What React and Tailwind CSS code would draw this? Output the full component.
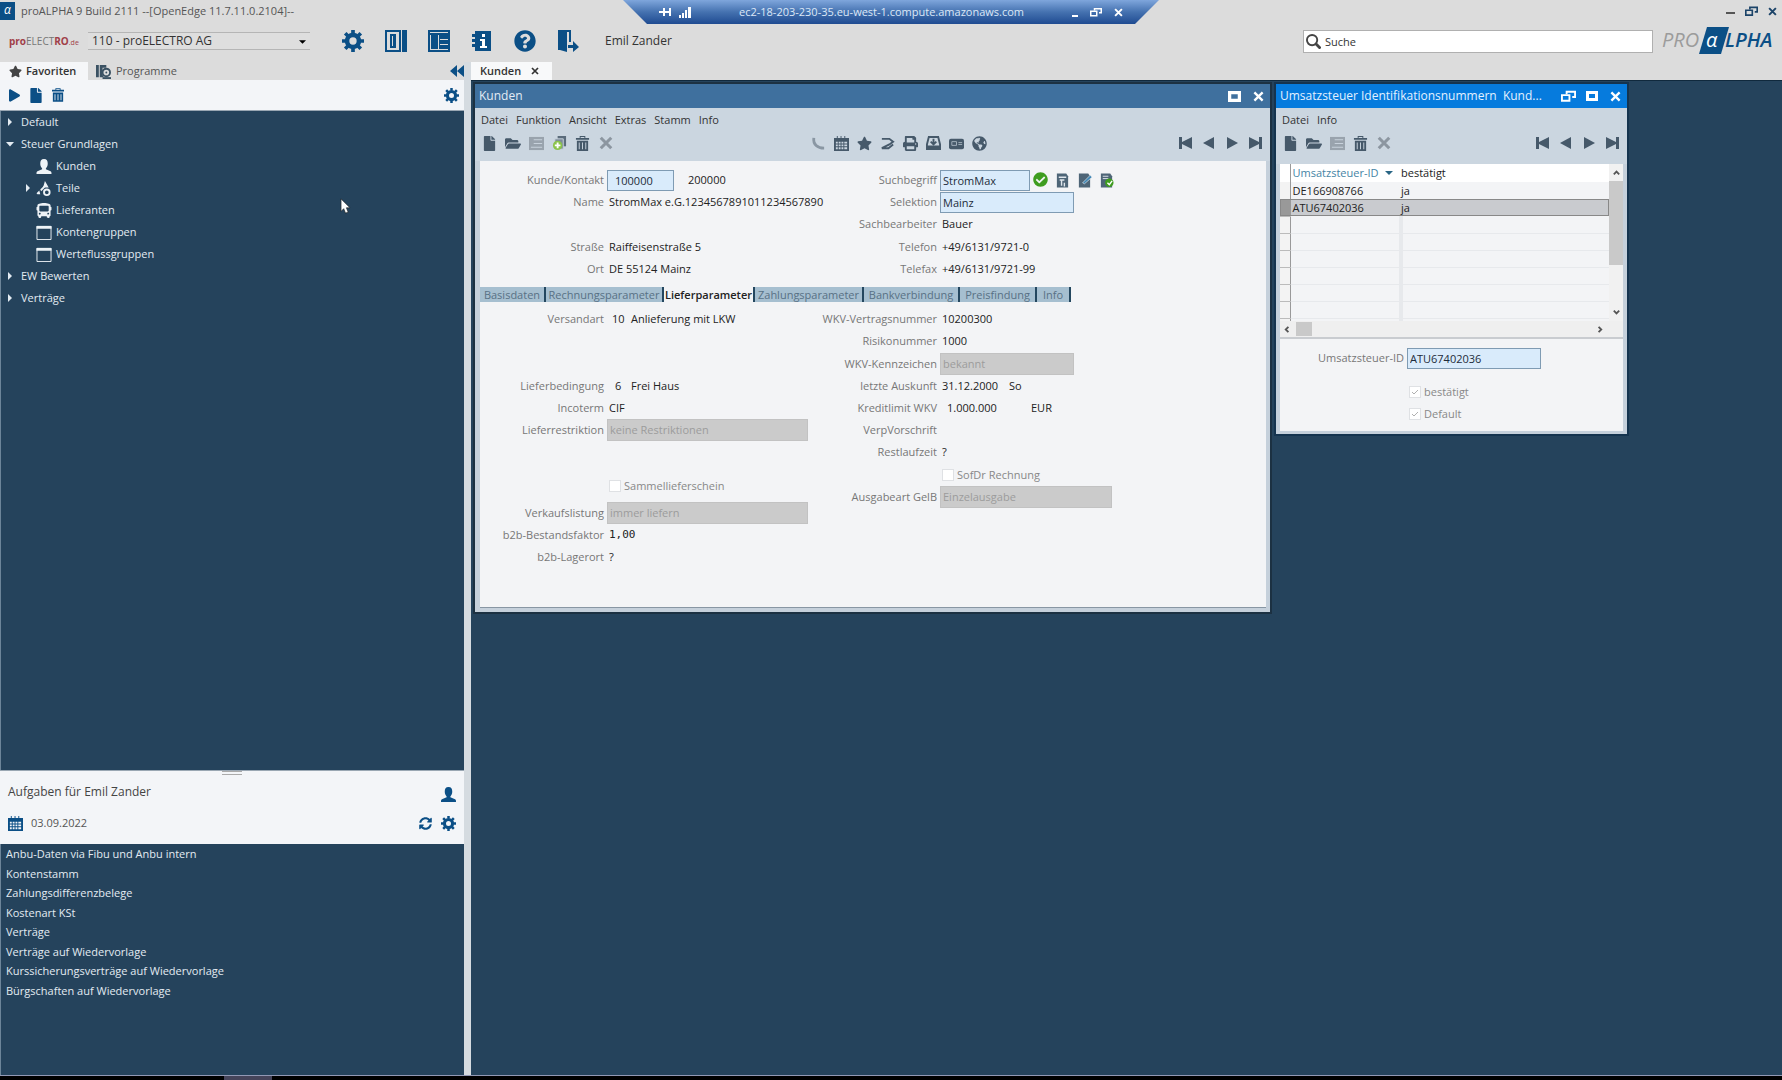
import {
  FaStar,
  FaPlay,
  FaFile,
  FaFolderOpen,
  FaPrint,
  FaBus,
  FaQuestionCircle,
  FaCheckCircle,
  FaSyncAlt,
  FaGlobeAmericas,
} from "react-icons/fa";

const GearIcon = ({ className }) => (
  <svg viewBox="-12 -12 24 24" className={className} stroke="currentColor" fill="none">
    <circle r="6.5" strokeWidth="5" />
    <path d="M0-12v4M0 12V8M-12 0h4M12 0H8M-8.500-8.500l3 3M8.500-8.500l-3 3M-8.500 8.500l3-3M8.500 8.500l-3-3" strokeWidth="4" />
  </svg>
);

const PersonIcon = ({ className }) => (
  <svg viewBox="0 0 16 16" className={className} fill="currentColor">
    <path d="M8 0c3 0 4 2 4 5 0 2-1 4-2 5v1l5 2c1 1 1 1 1 3H0c0-2 0-2 1-3l5-2v-1C5 9 4 7 4 5c0-3 1-5 4-5z" />
  </svg>
);

const TrashIcon = ({ className }) => (
  <svg viewBox="0 0 14 16" className={className} fill="currentColor">
    <path fillRule="evenodd" d="M4 0h6v2h4v2H0V2h4zM5 1v1h4V1zM1 5h12v11H1zM3 7v7h1V7zM6.500 7v7h1V7zM10 7v7h1V7z" />
  </svg>
);

const SpreadIcon = ({ className }) => (
  <svg viewBox="0 0 16 16" className={className} fill="currentColor">
    <path d="M3 0h1v2h3V0h1v2h3V0h1v2h4v14H0V2h3zM2 6v2h2V6zm3 0v2h2V6zm3 0v2h2V6zm3 0v2h3V6zM2 9v2h2V9zm3 0v2h2V9zm3 0v2h2V9zm3 0v2h3V9zM2 12v2h2v-2zm3 0v2h2v-2zm3 0v2h2v-2zm3 0v2h3v-2z" fillRule="evenodd" />
  </svg>
);

const CrossIcon = ({ className }) => (
  <svg viewBox="0 0 12 12" className={className} stroke="currentColor" strokeWidth="2.6" fill="none">
    <path d="M1.5 1.5l9 9M10.5 1.5l-9 9" />
  </svg>
);

const RestoreIcon = ({ className }) => (
  <svg viewBox="0 0 16 12" className={className} stroke="currentColor" strokeWidth="2" fill="none">
    <path d="M6 4V1.5h9V7h-3" />
    <path d="M1 5h8v6H1z" />
  </svg>
);

const MaxIcon = ({ className }) => (
  <svg viewBox="0 0 12 12" className={className} stroke="currentColor" strokeWidth="3" fill="none">
    <path d="M1.5 2.5h9v7h-9z" />
  </svg>
);

const SaveIcon = ({ className }) => (
  <svg viewBox="0 0 16 16" className={className} fill="currentColor">
    <path d="M0 1h16v14H0z" />
    <path d="M5 4h9M5 8h9M2 12h12" stroke="#cbd5df" strokeWidth="1" />
  </svg>
);

const CopyIcon = ({ className }) => (
  <svg viewBox="0 0 16 16" className={className}>
    <path d="M6 0h9v11H6z" fill="#5b6c7b" />
    <path d="M3 3h9v11H3z" fill="#7d8c99" stroke="#cbd5df" />
    <circle cx="6" cy="10" r="5" fill="#8bc34a" />
    <path d="M6 7v6M3 10h6" stroke="#fff" strokeWidth="2" />
  </svg>
);

const PhoneIcon = ({ className }) => (
  <svg viewBox="0 0 16 16" className={className} fill="none" stroke="currentColor" strokeWidth="3">
    <path d="M3 2c-1 7 4 11 11 11" />
  </svg>
);

const LinkIcon = ({ className }) => (
  <svg viewBox="0 0 16 16" className={className} fill="none" stroke="currentColor" strokeWidth="2">
    <path d="M2 3h8l4 3-4 3-8 4h7l5-4" />
  </svg>
);

const InboxIcon = ({ className }) => (
  <svg viewBox="0 0 16 16" className={className} fill="none" stroke="currentColor" strokeWidth="2">
    <path d="M3 1h10l2 8v5H1V9z" />
    <path d="M1 11h14v3H1z" fill="currentColor" />
    <path d="M8 3v6M5 6l3 3 3-3" />
  </svg>
);

const CardIcon = ({ className }) => (
  <svg viewBox="0 0 16 16" className={className}>
    <rect y="3" width="16" height="11" rx="2" fill="currentColor" />
    <path d="M3 6h5v4H3zM10 7h4M10 9h4" stroke="#a5b2be" fill="none" />
  </svg>
);

const PartsIcon = ({ className }) => (
  <svg viewBox="0 0 16 16" className={className} fill="currentColor">
    <path d="M9 0l4 7H7zM0 13l3-3 1 4H1z" />
    <path d="M4 9l4-4 1 2-4 4z" />
    <circle cx="11" cy="12" r="3" fill="none" stroke="currentColor" strokeWidth="2" />
  </svg>
);

const WindowIcon = ({ className }) => (
  <svg viewBox="0 0 16 16" className={className} fill="none" stroke="currentColor">
    <path d="M.5 1.5h15v14H.5z" />
    <path d="M0 2.5h16" strokeWidth="3" />
  </svg>
);

const ProgramsIcon = ({ className }) => (
  <svg viewBox="0 0 16 16" className={className} fill="currentColor">
    <path d="M0 1h3v13H0zM4 1h7v3H7v8h1v2H4z" />
    <circle cx="11" cy="9" r="4" fill="none" stroke="currentColor" strokeWidth="2" />
    <circle cx="11" cy="9" r="1" />
    <path d="M7 14h9v2H7z" />
  </svg>
);

const SearchIcon = ({ className }) => (
  <svg viewBox="0 0 16 16" className={className} fill="none" stroke="currentColor" strokeWidth="2">
    <circle cx="6.5" cy="6.5" r="5.5" />
    <path d="M10.5 10.5l5 5" strokeWidth="3" />
  </svg>
);

const SideIcon = ({ className }) => (
  <svg viewBox="0 0 22 22" className={className} fill="currentColor">
    <path fillRule="evenodd" d="M0 0h16v22H0zM2 2v18h12V2z" />
    <path d="M17 0h5v22h-5z" />
    <path fillRule="evenodd" d="M5 4h6v14H5zM7 6v10h1V6z" />
  </svg>
);

const GridIcon = ({ className }) => (
  <svg viewBox="0 0 22 22" className={className} fill="currentColor">
    <path fillRule="evenodd" d="M0 0h22v22H0zM2 2v1h18V2zM2 5v14h1V5zM10 5v14h1V5zM12 9v1h8V9zM12 14v1h8v-1zM2 20h18v-1H2z" />
  </svg>
);

const InfoIcon = ({ className }) => (
  <svg viewBox="0 0 22 22" className={className} fill="currentColor">
    <path d="M4 1h16v20H4z" />
    <path d="M1 4h4v3H1zM1 9h4v3H1zM1 14h4v3H1z" />
    <path d="M11 4h3v3h-3zM9 9h5v7h2v2H9v-2h2v-5H9z" fill="#fff" />
  </svg>
);

const ExitIcon = ({ className }) => (
  <svg viewBox="0 0 22 22" className={className} fill="currentColor">
    <path d="M1 0h13v12h-2V2h-2v20l-7-2H1z" />
    <path d="M11 15h5v-4l6 6-6 5v-4h-5z" />
  </svg>
);

const DocIcon = ({ className, badge }) => (
  <svg viewBox="0 0 16 16" className={className}>
    <path d="M2 1h10l2 3v12H2z" fill="#4e6577" />
    {badge === "text" && <path d="M4 5h8M7 8v6M5 8h5M10 11v4" stroke="#dfe6ec" strokeWidth="1.5" />}
    {badge === "edit" && <path d="M6 11l8-8 2 2-8 7z" fill="#3f86b5" stroke="#e3e9ee" strokeWidth=".7" />}
    {badge === "ok" && <path d="M4 4h6M4 6.500h6" stroke="#dfe6ec" />}
    {badge === "ok" && <circle cx="11" cy="11" r="4.500" fill="#3f9d1f" />}
    {badge === "ok" && <path d="M9 11l2 2 3-4" fill="none" stroke="#fff" strokeWidth="1.500" />}
  </svg>
);

const tree = [
  { label: "Default", arrow: "right" },
  { label: "Steuer Grundlagen", arrow: "down" },
  { label: "Kunden", icon: PersonIcon },
  { label: "Teile", icon: PartsIcon, arrow: "right" },
  { label: "Lieferanten", icon: FaBus },
  { label: "Kontengruppen", icon: WindowIcon },
  { label: "Werteflussgruppen", icon: WindowIcon },
  { label: "EW Bewerten", arrow: "right" },
  { label: "Verträge", arrow: "right" },
];

const tasks = [
  "Anbu-Daten via Fibu und Anbu intern",
  "Kontenstamm",
  "Zahlungsdifferenzbelege",
  "Kostenart KSt",
  "Verträge",
  "Verträge auf Wiedervorlage",
  "Kurssicherungsverträge auf Wiedervorlage",
  "Bürgschaften auf Wiedervorlage",
];

const tabs = [
  { label: "Basisdaten", width: "w-[66px]" },
  { label: "Rechnungsparameter", width: "w-[118px]" },
  { label: "Lieferparameter", width: "w-[91px]", active: true },
  { label: "Zahlungsparameter", width: "w-[109px]" },
  { label: "Bankverbindung", width: "w-[96px]" },
  { label: "Preisfindung", width: "w-[77px]" },
  { label: "Info", width: "w-[34px]" },
];

function IconButton({ label, children, className = "" }) {
  return (
    <button type="button" aria-label={label} className={`flex items-center justify-center ${className}`}>
      {children}
    </button>
  );
}

function Arrow({ dir }) {
  return (
    <svg viewBox="0 0 8 8" className="w-2 h-2 shrink-0" fill="currentColor">
      {dir === "down" ? <path d="M0 2h8L4 6.500z" /> : <path d="M2 0v8l4-4z" />}
    </svg>
  );
}

function RemoteBar() {
  return (
    <div className="absolute top-0 left-1/2 -translate-x-1/2 w-[536px] h-6 flex items-center pl-9 pr-9 text-white text-[11px] bg-linear-to-b from-[#7fa6dc] via-[#4572b0] to-[#1f4b91] [clip-path:polygon(0_0,100%_0,calc(100%-24px)_100%,24px_100%)]">
      <svg viewBox="0 0 12 10" className="w-3 h-[10px]" fill="none" stroke="currentColor" strokeWidth="2">
        <path d="M0 5h5M5 1v8M5 5h6M11 1v8" />
      </svg>
      <svg viewBox="0 0 12 12" className="w-3 h-3 ml-2" fill="currentColor">
        <path d="M0 9h2v3H0zM3 7h2v5H3zM6 4h2v8H6zM9 1h3v11H9z" />
      </svg>
      <span className="flex-1 text-center text-[#dce8f7]">ec2-18-203-230-35.eu-west-1.compute.amazonaws.com</span>
      <div className="flex items-center gap-3">
        <IconButton label="Minimieren"><span className="w-[6px] h-[2px] bg-white mt-2" /></IconButton>
        <IconButton label="Verkleinern"><RestoreIcon className="w-3 h-[10px]" /></IconButton>
        <IconButton label="Schließen"><CrossIcon className="w-[9px] h-[9px]" /></IconButton>
      </div>
    </div>
  );
}

function Logo() {
  return (
    <svg viewBox="0 0 120 28" className="w-[120px] h-7 shrink-0" role="img" aria-label="proALPHA">
      <path d="M45 0h22l-8 27H37z" fill="#0b4f86" />
      <g fontFamily="Open Sans, sans-serif" fontStyle="italic" fontSize="20">
        <text x="0" y="20" fill="#9b9b9b">PRO</text>
        <text x="44" y="20" fill="#fff">α</text>
        <text x="63" y="20" fill="#0b4f86" fontWeight="600">LPHA</text>
      </g>
    </svg>
  );
}

function Header() {
  return (
    <header className="relative bg-[#dcdcdc] text-[#333]">
      <div className="flex items-center h-[22px] text-[11px]">
        <div className="w-[15px] h-[18px] bg-[#0b4f86] text-white text-xs leading-4 text-center italic">α</div>
        <span className="ml-[6px] flex-1 text-[#555]">proALPHA 9 Build 2111 --[OpenEdge 11.7.11.0.2104]--</span>
        <div className="flex items-center gap-[10px] pr-[5px] text-[#1b4368]">
          <IconButton label="Fenster minimieren"><span className="w-[9px] h-[2px] bg-[#555] mt-1" /></IconButton>
          <IconButton label="Fenster verkleinern"><RestoreIcon className="w-[13px] h-[10px]" /></IconButton>
          <IconButton label="Fenster schließen"><CrossIcon className="w-[9px] h-[9px]" /></IconButton>
        </div>
      </div>
      <RemoteBar />
      <div className="flex items-center h-10 pb-[2px]">
        <div className="w-[88px] pl-[9px] text-[10px]">
          <b className="text-[#a04048]">pro</b><span className="text-[#777]">ELECT</span><b className="text-[#a04048]">RO</b><span className="text-[7px] text-[#a04048]">.de</span>
        </div>
        <div className="relative w-[222px]">
          <select aria-label="Firma" className="block w-full h-[18px] pl-1 appearance-none text-xs leading-4 border-y border-[#b5b5b5] bg-[#dedede]">
            <option>110 - proELECTRO AG</option>
          </select>
          <svg viewBox="0 0 8 4" className="absolute right-1 top-2 w-[7px] h-1 pointer-events-none"><path d="M0 0h8L4 4z" /></svg>
        </div>
        <div className="flex items-center gap-[21px] ml-8 text-[#0b4f86]">
          <IconButton label="Einstellungen"><GearIcon className="w-[22px] h-[22px]" /></IconButton>
          <IconButton label="Seitenleiste"><SideIcon className="w-[22px] h-[22px]" /></IconButton>
          <IconButton label="Layout"><GridIcon className="w-[22px] h-[22px]" /></IconButton>
          <IconButton label="Information"><InfoIcon className="w-[22px] h-[22px]" /></IconButton>
          <IconButton label="Hilfe"><FaQuestionCircle className="w-[22px] h-[22px]" /></IconButton>
          <IconButton label="Abmelden"><ExitIcon className="w-[22px] h-[22px]" /></IconButton>
        </div>
        <span className="ml-[26px] flex-1 text-xs">Emil Zander</span>
        <label className="flex items-center w-[350px] h-[23px] mr-[9px] px-[2px] bg-white border border-[#b0b0b0]">
          <SearchIcon className="w-[15px] h-[15px] text-[#444]" />
          <input aria-label="Suche" defaultValue="Suche" className="flex-1 h-full px-1 text-[11px] outline-none" />
        </label>
        <Logo />
      </div>
    </header>
  );
}

function Sidebar() {
  return (
    <aside className="flex flex-col w-[464px] shrink-0 bg-[#25435c]">
      <div className="flex h-[18px] bg-[#dcdcdc] text-[11px] text-[#444]">
        <button type="button" className="flex items-center w-[88px] pl-[9px] gap-1 bg-[#f5f6f8] font-semibold text-[#333]">
          <FaStar className="w-[13px] h-[13px] text-[#444]" />Favoriten
        </button>
        <button type="button" className="flex items-center pl-2 gap-[5px] text-[#555]">
          <ProgramsIcon className="w-[15px] h-[15px] text-[#3b5263]" />Programme
        </button>
        <IconButton label="Leiste einklappen" className="ml-auto text-[#0b4f86]">
          <svg viewBox="0 0 14 12" className="w-[14px] h-3" fill="currentColor"><path d="M7 0v12L0 6zM14 0v12L7 6z" /></svg>
        </IconButton>
      </div>
      <div className="flex items-center h-[31px] pl-[9px] pr-[5px] gap-[10px] bg-[#f3f5f8] border-b border-[#9aa7b3] text-[#0b4f86]">
        <IconButton label="Starten"><FaPlay className="w-[11px] h-[13px]" /></IconButton>
        <IconButton label="Neu"><FaFile className="w-3 h-[15px]" /></IconButton>
        <IconButton label="Löschen"><TrashIcon className="w-3 h-[14px]" /></IconButton>
        <IconButton label="Favoriten einstellen" className="ml-auto"><GearIcon className="w-[15px] h-[15px]" /></IconButton>
      </div>
      <ul className="flex-1 border-l border-[#6d8599] text-[11px] text-[#e3ebf2]">
        {tree.map(({ label, arrow, icon: Icon }) => (
          <li key={label} className={`flex items-center h-[22px] ${Icon ? "pl-[23px]" : "pl-[5px]"}`}>
            <span className={Icon ? "w-3" : "w-[15px]"}>{arrow && <Arrow dir={arrow} />}</span>
            {Icon && <Icon className="w-4 h-[15px] mr-1 text-[#eef3f7]" />}
            {label}
          </li>
        ))}
      </ul>
      <section className="h-[74px] px-[8px] bg-[#f3f5f8] border-t border-[#9aa7b3] text-[#444]">
        <div className="w-5 h-1 mx-auto border-y border-[#aaa]" />
        <div className="flex items-center justify-between h-[34px]">
          <h2 className="text-xs">Aufgaben für Emil Zander</h2>
          <PersonIcon className="w-[15px] h-[15px] mt-1 text-[#0b4f86]" />
        </div>
        <div className="flex items-center h-7 text-[11px] text-[#555]">
          <SpreadIcon className="w-[15px] h-[15px] text-[#0b4f86]" />
          <span className="ml-2">03.09.2022</span>
          <div className="flex gap-2 ml-auto text-[#0b4f86]">
            <IconButton label="Aktualisieren"><FaSyncAlt className="w-[15px] h-[13px]" /></IconButton>
            <IconButton label="Aufgaben einstellen"><GearIcon className="w-[15px] h-[15px]" /></IconButton>
          </div>
        </div>
      </section>
      <div className="h-[231px] pl-[5px] border-l border-[#6d8599]">
        <ul className="flex flex-col justify-between h-[156px] text-[11px] leading-[19px] text-[#e3ebf2]">
          {tasks.map((task) => <li key={task}>{task}</li>)}
        </ul>
      </div>
    </aside>
  );
}

const TriangleIcon = ({ d }) => (
  <svg viewBox="0 0 14 14" className="w-[14px] h-[14px]" fill="currentColor"><path d={d} /></svg>
);

function Navigation() {
  return (
    <div className="flex gap-[9px] text-[#46596a]">
      <IconButton label="Erster Satz"><TriangleIcon d="M0 1h3v5l10-5v12L3 8v5H0z" /></IconButton>
      <IconButton label="Voriger Satz"><TriangleIcon d="M12 1v12L1 7z" /></IconButton>
      <IconButton label="Nächster Satz"><TriangleIcon d="M2 1v12l11-6z" /></IconButton>
      <IconButton label="Letzter Satz"><TriangleIcon d="M14 1h-3v5L1 1v12l10-5v5h3z" /></IconButton>
    </div>
  );
}

function Menu({ items }) {
  return (
    <nav className="flex items-center gap-2 h-6 px-[6px] text-[11px] text-[#333]">
      {items.map((item) => <button key={item} type="button">{item}</button>)}
    </nav>
  );
}

function EditIcons({ copy }) {
  return (
    <div className="flex gap-2 text-[#46596a]">
      <IconButton label="Neu"><FaFile className="w-[15px] h-[15px]" /></IconButton>
      <IconButton label="Öffnen"><FaFolderOpen className="w-4 h-[15px]" /></IconButton>
      <IconButton label="Speichern"><SaveIcon className="w-[15px] h-[15px] text-[#99a3ad]" /></IconButton>
      {copy && <IconButton label="Kopieren"><CopyIcon className="w-[15px] h-[15px]" /></IconButton>}
      <IconButton label="Löschen"><TrashIcon className="w-[15px] h-[15px]" /></IconButton>
      <IconButton label="Abbrechen"><CrossIcon className="w-4 h-[14px] text-[#8c96a0]" /></IconButton>
    </div>
  );
}

function Row({ label, id, children, className = "" }) {
  return (
    <div className={`flex items-center h-[22px] whitespace-nowrap ${className}`}>
      <label htmlFor={id} className="w-[124px] mr-[5px] text-right text-[#777] shrink-0">{label}</label>
      {children}
    </div>
  );
}

function Field({ id, value, className }) {
  return <input id={id} defaultValue={value} className={`h-[21px] -ml-[2px] px-[2px] bg-[#d9ebfb] border border-[#7f9bb3] text-[#1d2c3a] ${className}`} />;
}

function Disabled({ id, value, className }) {
  return (
    <select id={id} disabled className={`h-[22px] -ml-[2px] px-[2px] appearance-none bg-[#cbcbcb] border border-[#c2c2c2] text-[#9c9c9c] opacity-100 ${className}`}>
      <option>{value}</option>
    </select>
  );
}

function Check({ label, checked }) {
  return (
    <label className="flex items-center gap-[3px] text-[#888]">
      <span className="relative flex">
        <input type="checkbox" disabled defaultChecked={checked} className="w-3 h-3 appearance-none bg-white border border-[#dfe1e4]" />
        {checked && <svg viewBox="0 0 12 12" className="absolute inset-0 w-3 h-3" fill="none" stroke="#b0b0b0"><path d="M3 6l2 2 4-4" /></svg>}
      </span>
      {label}
    </label>
  );
}

function CustomerWindow() {
  return (
    <section className="absolute left-[2px] top-[1px] w-[799px] h-[532px] flex flex-col bg-[#c5d0db] border-2 border-[#1c3142] text-[11px]">
      <div className="flex items-center h-[24px] pl-1 pr-[6px] bg-[#3f709e] text-white">
        <h2 className="flex-1 text-xs text-[#e3ecf5]">Kunden</h2>
        <IconButton label="Maximieren" className="mr-3"><MaxIcon className="w-[13px] h-[13px]" /></IconButton>
        <IconButton label="Schließen"><CrossIcon className="w-[11px] h-[11px]" /></IconButton>
      </div>
      <div className="h-[53px] bg-[#cbd6e0]">
        <Menu items={["Datei", "Funktion", "Ansicht", "Extras", "Stamm", "Info"]} />
        <div className="flex items-center justify-between pl-[7px] pr-2 h-[22px]">
          <EditIcons copy />
          <div className="flex gap-2 ml-1 text-[#46596a]">
            <IconButton label="Telefon"><PhoneIcon className="w-[15px] h-[15px] text-[#8a97a3]" /></IconButton>
            <IconButton label="Kalender"><SpreadIcon className="w-[15px] h-[15px]" /></IconButton>
            <IconButton label="Favorit"><FaStar className="w-[15px] h-[15px]" /></IconButton>
            <IconButton label="Verknüpfung"><LinkIcon className="w-[15px] h-[15px]" /></IconButton>
            <IconButton label="Drucken"><FaPrint className="w-[15px] h-[15px]" /></IconButton>
            <IconButton label="Ablage"><InboxIcon className="w-[15px] h-[15px]" /></IconButton>
            <IconButton label="Karte"><CardIcon className="w-[15px] h-[15px]" /></IconButton>
            <IconButton label="Web"><FaGlobeAmericas className="w-[15px] h-[15px]" /></IconButton>
          </div>
          <Navigation />
        </div>
      </div>
      <div className="flex-1 ml-[5px] mr-1 mb-1 pt-[8px] bg-[#f3f4f6] border-b border-[#8896a3] text-[#222]">
        <div className="grid grid-cols-[333px_1fr]">
          <div>
            <Row label="Kunde/Kontakt" id="kunde">
              <Field id="kunde" value="100000" className="w-[67px] pl-[7px]" />
              <span className="ml-[14px]">200000</span>
            </Row>
            <Row label="Name">StromMax e.G.1234567891011234567890</Row>
            <Row />
            <Row label="Straße" className="mt-px">Raiffeisenstraße 5</Row>
            <Row label="Ort">DE 55124 Mainz</Row>
          </div>
          <div>
            <Row label="Suchbegriff" id="such">
              <Field id="such" value="StromMax" className="w-[90px]" />
              <div className="flex gap-[7px] ml-[3px]">
                <FaCheckCircle className="w-[15px] h-[15px] text-[#3f9d1f]" />
                <DocIcon badge="text" className="w-[15px] h-4" />
                <DocIcon badge="edit" className="w-[15px] h-4" />
                <DocIcon badge="ok" className="w-[15px] h-4" />
              </div>
            </Row>
            <Row label="Selektion" id="selektion"><Field id="selektion" value="Mainz" className="w-[134px]" /></Row>
            <Row label="Sachbearbeiter">Bauer</Row>
            <Row label="Telefon" className="mt-px">+49/6131/9721-0</Row>
            <Row label="Telefax">+49/6131/9721-99</Row>
          </div>
        </div>
        <div role="tablist" className="flex h-[15px] mt-[7px] leading-[14px]">
          {tabs.map(({ label, width, active }) => (
            <button
              key={label}
              role="tab"
              type="button"
              aria-selected={Boolean(active)}
              className={`${width} text-center whitespace-nowrap border-r-2 border-[#24475f] ${active ? "font-semibold text-[#222]" : "bg-[#a6bfd0] text-[#587185]"}`}
            >
              {label}
            </button>
          ))}
        </div>
        <div className="grid grid-cols-[333px_1fr] pt-[6px]">
          <div>
            <Row label="Versandart"><span className="w-[22px] pl-[3px]">10</span>Anlieferung mit LKW</Row>
            <Row />
            <Row />
            <Row label="Lieferbedingung" className="mt-px"><span className="w-[22px] pl-[6px]">6</span>Frei Haus</Row>
            <Row label="Incoterm">CIF</Row>
            <Row label="Lieferrestriktion" id="restriktion"><Disabled id="restriktion" value="keine Restriktionen" className="w-[201px]" /></Row>
            <Row className="mt-[34px]"><Check label="Sammellieferschein" /></Row>
            <Row label="Verkaufslistung" id="listung" className="mt-[5px]"><Disabled id="listung" value="immer liefern" className="w-[201px]" /></Row>
            <Row label="b2b-Bestandsfaktor"><span className="font-['DejaVu_Sans_Mono',monospace]">1,00</span></Row>
            <Row label="b2b-Lagerort">?</Row>
          </div>
          <div>
            <Row label="WKV-Vertragsnummer">10200300</Row>
            <Row label="Risikonummer">1000</Row>
            <Row label="WKV-Kennzeichen" id="wkv" className="mt-px"><Disabled id="wkv" value="bekannt" className="w-[134px]" /></Row>
            <Row label="letzte Auskunft"><span className="w-[67px]">31.12.2000</span>So</Row>
            <Row label="Kreditlimit WKV"><span className="w-[89px] pl-[5px]">1.000.000</span>EUR</Row>
            <Row label="VerpVorschrift" />
            <Row label="Restlaufzeit">?</Row>
            <Row className="mt-px"><Check label="SofDr Rechnung" /></Row>
            <Row label="Ausgabeart GelB" id="ausgabe"><Disabled id="ausgabe" value="Einzelausgabe" className="w-[172px]" /></Row>
          </div>
        </div>
      </div>
    </section>
  );
}

const Chevron = ({ d, className = "" }) => (
  <svg viewBox="0 0 10 10" className={`w-[9px] h-[9px] ${className}`} fill="none" stroke="#555" strokeWidth="2"><path d={d} /></svg>
);

function VatWindow() {
  const rows = [["DE166908766", "ja"], ["ATU67402036", "ja"], [], [], [], [], [], [], []];

  return (
    <section className="absolute left-[803px] top-[1px] w-[355px] h-[354px] flex flex-col bg-[#c5d0db] border-2 border-[#15344f] text-[11px]">
      <div className="flex items-center h-[24px] pl-1 pr-[6px] bg-[#067bdd] text-white">
        <h2 className="flex-1 text-xs whitespace-nowrap text-[#e3f1ff]">Umsatzsteuer Identifikationsnummern&nbsp; Kund...</h2>
        <IconButton label="Verkleinern" className="mr-[10px]"><RestoreIcon className="w-[15px] h-3" /></IconButton>
        <IconButton label="Maximieren" className="mr-3"><MaxIcon className="w-[12px] h-[12px]" /></IconButton>
        <IconButton label="Schließen"><CrossIcon className="w-[11px] h-[11px]" /></IconButton>
      </div>
      <div className="h-[56px] bg-[#cbd6e0]">
        <Menu items={["Datei", "Info"]} />
        <div className="flex items-center justify-between pl-[7px] pr-[8px] h-[22px]">
          <EditIcons />
          <Navigation />
        </div>
      </div>
      <div className="flex-1 mx-1 mb-[3px] bg-[#f3f4f6] text-[#222]">
        <div className="flex h-[157px] overflow-hidden">
          <table className="flex-1 table-fixed border-collapse self-start">
            <thead>
              <tr className="h-[18px] bg-white text-left">
                <th className="w-[10px] border-r border-[#999]" />
                <th className="w-[111px] pl-[2px] py-0 font-normal text-[#4584a5]">
                  <div className="flex items-center gap-[6px] whitespace-nowrap">Umsatzsteuer-ID<svg viewBox="0 0 8 4" className="w-2 h-1 shrink-0" fill="#2a6685"><path d="M0 0h8L4 4z" /></svg></div>
                </th>
                <th className="p-0 font-normal">bestätigt</th>
              </tr>
            </thead>
            <tbody>
              {rows.map(([id, ok], i) => (
                <tr key={i} className={`h-[17px] leading-4 ${i === 1 ? "bg-[#c9cbcf] outline outline-[#888] -outline-offset-1" : ""}`}>
                  <td className={`w-[10px] p-0 border-r border-b border-r-[#999] border-b-[#bbb] ${i === 1 ? "bg-[#999]" : "bg-[#f3f3f3]"}`} />
                  <td className={`p-0 pl-[2px] ${i > 1 ? "border-b border-r-4 border-[#e7e9ec]" : ""}`}>{id}</td>
                  <td className={`p-0 ${i > 1 ? "border-b border-[#e7e9ec]" : ""}`}>{ok}</td>
                </tr>
              ))}
            </tbody>
          </table>
          <div className="flex flex-col items-center w-[14px] bg-[#f1f1f1]">
            <Chevron d="M2 7l3-3 3 3" className="my-1" />
            <div className="w-full h-[84px] bg-[#c9c9c9]" />
            <Chevron d="M2 3l3 3 3-3" className="mt-auto mb-1" />
          </div>
        </div>
        <div className="flex items-center h-[18px] pl-[3px] pr-[19px] bg-[#efefef] border-b-2 border-[#c9ccd0]">
          <Chevron d="M6 2L3 5l3 3" />
          <div className="w-4 h-[14px] ml-[4px] bg-[#c9c9c9]" />
          <Chevron d="M4 2l3 3-3 3" className="ml-auto" />
        </div>
        <div className="pt-[8px]">
          <Row label="Umsatzsteuer-ID" id="ust"><Field id="ust" value="ATU67402036" className="w-[134px]" /></Row>
          <Row className="mt-3"><Check label="bestätigt" checked /></Row>
          <Row><Check label="Default" checked /></Row>
        </div>
      </div>
    </section>
  );
}

export default function App() {
  return (
    <div className="relative h-screen flex flex-col overflow-hidden font-['Open_Sans','Noto_Sans',sans-serif]">
      <Header />
      <div className="flex flex-1 min-h-0">
        <Sidebar />
        <div className="w-[7px] shrink-0 bg-[#d5dbe0]" />
        <main className="flex flex-col flex-1 bg-[#dcdcdc]">
          <div className="flex h-[18px]">
            <div className="flex items-center w-[81px] pl-[9px] gap-[10px] bg-[#f8f9fa] text-[11px] font-semibold text-[#333]">
              Kunden
              <IconButton label="Tab schließen"><CrossIcon className="w-2 h-2" /></IconButton>
            </div>
          </div>
          <div className="relative flex-1 bg-[#25435c] border-t border-[#10293d]">
            <CustomerWindow />
            <VatWindow />
          </div>
        </main>
      </div>
      <footer className="h-[5px] bg-black border-t border-[#9299b5]">
        <div className="w-12 h-1 ml-56 bg-[#45445a]" />
      </footer>
      <svg viewBox="0 0 12 18" className="absolute left-[340px] top-[198px] w-[11px] h-4" fill="#fff" stroke="#222" strokeWidth=".7">
        <path d="M1 1v14l3-3 2 5 3-1-2-5h4z" />
      </svg>
    </div>
  );
}
